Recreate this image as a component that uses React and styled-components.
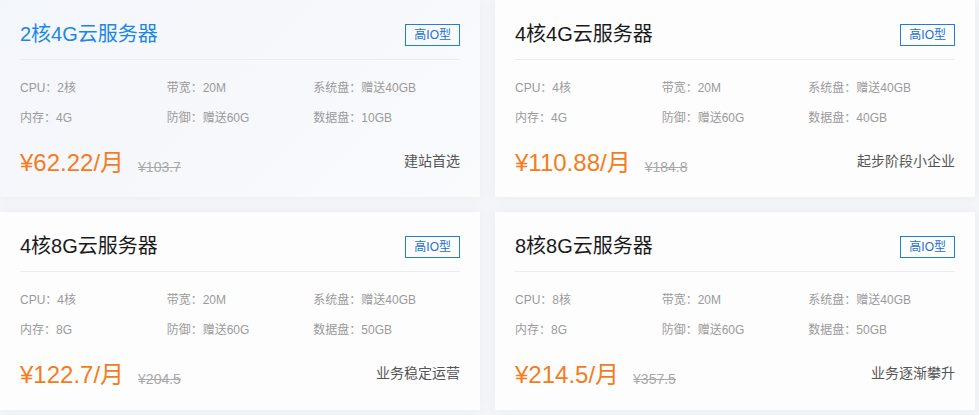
import React from "react";
import styled, { createGlobalStyle } from "styled-components";

const Global = createGlobalStyle`
  html, body { margin: 0; padding: 0; }
  body {
    background: #f4f5f8;
    font-family: "Liberation Sans", Arial, "Noto Sans CJK SC", sans-serif;
  }
`;

const Grid = styled.div`
  display: grid;
  grid-template-columns: 480px 480px;
  grid-template-rows: 197px 198px;
  column-gap: 15px;
  row-gap: 15px;
  width: 979px;
  height: 415px;
  box-sizing: border-box;
`;

const Card = styled.div`
  box-sizing: border-box;
  padding: 20px;
  background: ${(p) =>
    p.$active
      ? "linear-gradient(135deg, #f3f6fb 0%, #f7f8fc 60%, #fafbfd 100%)"
      : "#fdfdfe"};
  box-shadow: 0 0 12px rgba(30, 40, 80, 0.04);
  display: flex;
  flex-direction: column;
`;

const Header = styled.div`
  display: flex;
  align-items: center;
  justify-content: space-between;
  height: 28px;
  padding-bottom: 11px;
  border-bottom: 1px solid #e9ecf1;
`;

const Title = styled.div`
  font-size: 20px;
  color: ${(p) => (p.$active ? "#1a87e4" : "#1a1a1a")};
  line-height: 28px;
`;

const Badge = styled.div`
  box-sizing: border-box;
  height: 22px;
  padding: 0 8px;
  border: 1px solid #1f7fd6;
  color: #1c6fcb;
  font-size: 12px;
  line-height: 20px;
  margin-top: 2px;
`;

const Specs = styled.div`
  display: grid;
  grid-template-columns: repeat(3, 1fr);
  margin-top: 13px;
`;

const Spec = styled.div`
  font-size: 12px;
  color: #9a9a9a;
  line-height: 30px;
`;

const Footer = styled.div`
  display: flex;
  align-items: center;
  justify-content: space-between;
  margin-top: 10px;
  height: 34px;
`;

const PriceGroup = styled.div`
  display: flex;
  align-items: baseline;
`;

const Price = styled.span`
  font-size: 24px;
  color: #f47c1c;
`;

const OldPrice = styled.span`
  font-size: 14px;
  color: #a8a8a8;
  text-decoration: line-through;
  margin-left: 14px;
  position: relative;
  top: 1px;
`;

const Tag = styled.span`
  font-size: 14px;
  color: #555;
`;

const plans = [
  { title: "2核4G云服务器", cpu: "2核", mem: "4G", disk: "10GB", price: "¥62.22/月", old: "¥103.7", tag: "建站首选", active: true },
  { title: "4核4G云服务器", cpu: "4核", mem: "4G", disk: "40GB", price: "¥110.88/月", old: "¥184.8", tag: "起步阶段小企业" },
  { title: "4核8G云服务器", cpu: "4核", mem: "8G", disk: "50GB", price: "¥122.7/月", old: "¥204.5", tag: "业务稳定运营" },
  { title: "8核8G云服务器", cpu: "8核", mem: "8G", disk: "50GB", price: "¥214.5/月", old: "¥357.5", tag: "业务逐渐攀升" },
];

export default function App() {
  return (
    <>
      <Global />
      <Grid>
        {plans.map((p) => (
          <Card key={p.title} $active={p.active}>
            <Header>
              <Title $active={p.active}>{p.title}</Title>
              <Badge>高IO型</Badge>
            </Header>
            <Specs>
              <Spec>CPU：{p.cpu}</Spec>
              <Spec>带宽：20M</Spec>
              <Spec>系统盘：赠送40GB</Spec>
              <Spec>内存：{p.mem}</Spec>
              <Spec>防御：赠送60G</Spec>
              <Spec>数据盘：{p.disk}</Spec>
            </Specs>
            <Footer>
              <PriceGroup>
                <Price>{p.price}</Price>
                <OldPrice>{p.old}</OldPrice>
              </PriceGroup>
              <Tag>{p.tag}</Tag>
            </Footer>
          </Card>
        ))}
      </Grid>
    </>
  );
}
